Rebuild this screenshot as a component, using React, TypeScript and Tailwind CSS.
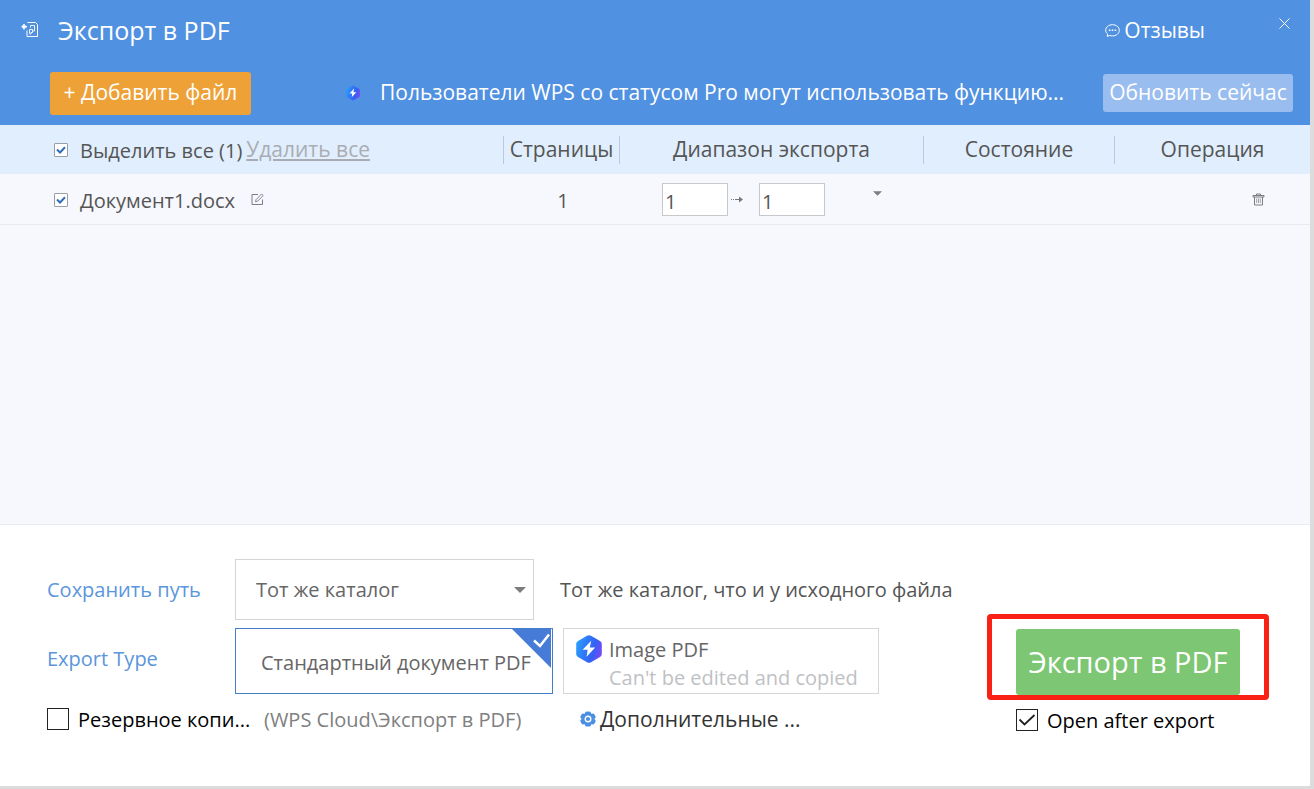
import { useState, type ReactNode } from "react";

function ExportDocIcon() {
  return (
    <svg width="18" height="18" viewBox="0 0 18 18" fill="none" stroke="#fff" aria-hidden="true">
      <path d="M6.500 1.500h8l2 2v12h-10.500v-6" />
      <path d="M8.500 12.500v-4h3v3h-1.500v1.500h-1.500M9.500 6.500v-2h4v5.500h-1.500" strokeWidth="0.9" />
      <path d="M3 3v5.500M0.500 5.700h5.500" strokeWidth="1.600" />
      <path d="M1.500 4.200l3 3M4.500 4.200l-3 3" strokeWidth="1" />
    </svg>
  );
}

function HexBolt({ id, className }: { id: string; className: string }) {
  return (
    <svg className={className} viewBox="0 0 26 28" aria-hidden="true">
      <defs>
        <linearGradient id={id} x1="0" y1="0.3" x2="1" y2="0.6">
          <stop offset="0" stopColor="#2aa0fb" />
          <stop offset="0.35" stopColor="#2f7cf8" />
          <stop offset="0.7" stopColor="#3560f4" />
          <stop offset="1" stopColor="#7a48f5" />
        </linearGradient>
      </defs>
      <path
        d="M11 0.8q2-1.1 4 0l9 5.1q1.8 1.1 1.8 3.1v10q0 2-1.8 3.1l-9 5.1q-2 1.1-4 0l-9-5.1Q0.2 21 0.2 19V9q0-2 1.8-3.1z"
        fill={`url(#${id})`}
      />
      <path d="M15.200 5.800 6.600 14.800h5l-1 7 8.600-9.200h-5.400z" fill="#fff" />
    </svg>
  );
}

function ChatIcon() {
  return (
    <svg width="15" height="15" viewBox="0 0 15 15" fill="none" stroke="#fff" aria-hidden="true">
      <path d="M2.300 13.400 2.600 11C1.300 10 0.700 8.700 0.700 7.300 0.700 4.100 3.700 1.700 7.500 1.700s6.800 2.400 6.800 5.600-3 5.600-6.800 5.600c-1 0-1.800-.1-2.600-.4z" />
      <path d="M3.800 7.300h1.600M6.700 7.300h1.600M9.600 7.300h1.600" strokeWidth="1.500" />
    </svg>
  );
}

function EditIcon() {
  return (
    <svg width="13" height="13" viewBox="0 0 13 13" fill="none" stroke="#7b7f85" aria-hidden="true">
      <path d="M7 1.500H1v10h10.500V6.500" />
      <path d="M4.500 8.700 5 6.700 10.600 1 12.200 2.500 6.600 8.200z" strokeWidth="0.9" />
    </svg>
  );
}

function TrashIcon() {
  return (
    <svg width="13" height="13" viewBox="0 0 13 13" fill="none" stroke="#7b7d83" aria-hidden="true">
      <path d="M1 2.500h11v1.500H1zM4.500 2.500v-1.500h4v1.500M2.500 4v8h8v-8" />
      <path d="M4.700 5.500v4.500M6.500 5.500v4.500M8.300 5.500v4.500" strokeWidth="0.700" />
    </svg>
  );
}

function GearIcon() {
  return (
    <svg width="16" height="16" viewBox="0 0 16 16" aria-hidden="true">
      <path
        d="M5.500.8q2.500-.7 5 0l.6 1.600.8.4 1.700-.3q1.700 1.700 2.200 4L14.600 7.600v.8l1.200 1.100q-.5 2.300-2.200 4l-1.700-.3-.8.4-.6 1.600q-2.500.7-5 0l-.6-1.600-.8-.4-1.700.3q-1.700-1.700-2.200-4L1.400 8.400v-.8L.2 6.500q.5-2.300 2.200-4l1.700.3.8-.4z"
        fill="#4a8fe2"
      />
      <circle cx="8" cy="8" r="2.800" fill="none" stroke="#fff" strokeWidth="1.400" />
    </svg>
  );
}

function Caret({ className }: { className: string }) {
  return (
    <svg className={className} viewBox="0 0 12 6" aria-hidden="true">
      <path d="M0 0h12L6 6z" fill="#7d7d7d" />
    </svg>
  );
}

function SmallCheck({ label, checked, onChange }: { label: string; checked: boolean; onChange: () => void }) {
  return (
    <span className="inline-grid shrink-0 place-items-center">
      <input
        type="checkbox"
        aria-label={label}
        checked={checked}
        onChange={onChange}
        className="col-start-1 row-start-1 size-3.5 appearance-none rounded-[1px] border border-[#9a9da3] bg-white"
      />
      {checked && (
        <svg className="pointer-events-none col-start-1 row-start-1 size-3.5" viewBox="0 0 14 14" fill="none" aria-hidden="true">
          <path d="M3 6.500 6 9.500 11 4.300" stroke="#2f6db8" strokeWidth="2" />
        </svg>
      )}
    </span>
  );
}

function LargeCheck({ checked, onChange, children }: { checked: boolean; onChange: () => void; children: ReactNode }) {
  return (
    <label className="flex items-center gap-[9px] text-xl leading-7 text-black">
      <span className="grid shrink-0 place-items-center">
        <input
          type="checkbox"
          checked={checked}
          onChange={onChange}
          className="col-start-1 row-start-1 size-[22px] appearance-none border border-[#222] bg-white"
        />
        {checked && (
          <svg className="pointer-events-none col-start-1 row-start-1 size-[22px]" viewBox="0 0 22 22" fill="none" aria-hidden="true">
            <path d="M3.500 10.500 8.500 15.500 18.500 6" stroke="#222" strokeWidth="1.800" />
          </svg>
        )}
      </span>
      <span className="pt-0.5 whitespace-nowrap">{children}</span>
    </label>
  );
}

function HeadCell({ children }: { children: ReactNode }) {
  return (
    <th scope="col" className="p-0 font-normal">
      <div className="flex h-7 items-center justify-center border-l border-[#b9c8dc] text-[21px] whitespace-nowrap">
        {children}
      </div>
    </th>
  );
}

const pageInput = "h-[33px] w-[66px] border border-[#c6c8cb] bg-white px-0.5 pt-1 text-xl text-[#555] outline-none";

export default function App() {
  const [selected, setSelected] = useState(true);
  const [backup, setBackup] = useState(false);
  const [openAfter, setOpenAfter] = useState(true);
  const [from, setFrom] = useState("1");
  const [to, setTo] = useState("1");

  return (
    <div className="flex min-h-screen flex-col border-r-4 border-b-3 border-[#dcdcdc] bg-white font-['Open_Sans','Noto_Sans',sans-serif] text-[#555]">
      <header className="bg-[#5191e1] text-white">
        <div className="flex h-[62px] items-center pb-0.5 pl-[21px]">
          <ExportDocIcon />
          <h1 className="ml-[19px] text-[25px] leading-8">Экспорт в PDF</h1>
          <a href="#feedback" className="ml-auto flex items-center gap-1 text-[21px] leading-7">
            <ChatIcon />
            Отзывы
          </a>
          <button type="button" aria-label="Закрыть" className="mr-5 mb-3.5 ml-[74px]">
            <svg width="11" height="11" viewBox="0 0 11 11" stroke="#fff" aria-hidden="true">
              <path d="M0.500 0.500l10 10M10.500 0.500l-10 10" />
            </svg>
          </button>
        </div>
        <div className="flex h-[63px] items-center pr-[17px] pb-px pl-[50px] text-[21px]">
          <button type="button" className="h-[43px] w-[201px] shrink-0 rounded-[3px] bg-[#eda137] whitespace-nowrap">
            + Добавить файл
          </button>
          <div className="ml-[95px] flex flex-1 items-center gap-5">
            <HexBolt id="bolt-small" className="h-4 w-3.5 shrink-0" />
            <p className="whitespace-nowrap">Пользователи WPS со статусом Pro могут использовать функцию...</p>
          </div>
          <button type="button" className="h-[38px] w-[190px] shrink-0 rounded-[3px] bg-[#99bdee] whitespace-nowrap">
            Обновить сейчас
          </button>
        </div>
      </header>

      <main className="flex-1 bg-[#f6f8fd]">
        <table className="w-full table-fixed border-collapse text-xl">
          <colgroup>
            <col />
            <col className="w-[116px]" />
            <col className="w-[304px]" />
            <col className="w-[191px]" />
            <col className="w-[196px]" />
          </colgroup>
          <thead>
            <tr className="h-[49px] bg-[#e0eefd]">
              <th scope="col" className="p-0 pl-[54px] text-left font-normal">
                <div className="flex items-center">
                  <SmallCheck label="Выделить все" checked={selected} onChange={() => setSelected(!selected)} />
                  <span className="ml-3 pt-0.5 whitespace-nowrap">Выделить все (1)</span>
                  <button type="button" className="ml-1 text-[21px] whitespace-nowrap text-[#a9adb3] underline underline-offset-2">
                    Удалить все
                  </button>
                </div>
              </th>
              <HeadCell>Страницы</HeadCell>
              <HeadCell>Диапазон экспорта</HeadCell>
              <HeadCell>Состояние</HeadCell>
              <HeadCell>Операция</HeadCell>
            </tr>
          </thead>
          <tbody>
            <tr className="h-[50px] border-b border-[#e7eaef]">
              <td className="p-0 pt-0.5 pl-[54px]">
                <div className="flex items-center">
                  <SmallCheck label="Документ1.docx" checked={selected} onChange={() => setSelected(!selected)} />
                  <span className="ml-3 pt-0.5">Документ1.docx</span>
                  <button type="button" aria-label="Переименовать" className="ml-4">
                    <EditIcon />
                  </button>
                </div>
              </td>
              <td className="p-0 pt-1 pl-1 text-center">1</td>
              <td className="p-0 pt-0.5 pl-[43px]">
                <div className="flex items-center">
                  <input aria-label="Первая страница" value={from} onChange={(e) => setFrom(e.target.value)} className={pageInput} />
                  <svg className="mx-[3px]" width="25" height="7" viewBox="0 0 25 7" aria-hidden="true">
                    <path d="M0 3h1v1h-1zM2 3h1v1h-1zM4 3h7v1h-7zM8 0.500 12 3.500 8 6.500z" fill="#777" />
                  </svg>
                  <input aria-label="Последняя страница" value={to} onChange={(e) => setTo(e.target.value)} className={pageInput} />
                  <button type="button" aria-label="Выбрать диапазон" className="mb-3 ml-12">
                    <Caret className="h-[5px] w-[9px]" />
                  </button>
                </div>
              </td>
              <td className="p-0" />
              <td className="p-0 pt-0.5">
                <button type="button" aria-label="Удалить" className="ml-[138px] block">
                  <TrashIcon />
                </button>
              </td>
            </tr>
          </tbody>
        </table>
      </main>

      <footer className="flex justify-between border-t border-[#e9ebf0] pt-[34px] pr-[70px] pb-[51px] pl-[47px] text-xl">
        <div className="flex flex-col">
          <div className="flex items-center">
            <label htmlFor="save-path" className="w-47 text-[#5b96dc]">
              Сохранить путь
            </label>
            <div className="grid w-[299px] items-center">
              <select
                id="save-path"
                className="col-start-1 row-start-1 h-[61px] w-full appearance-none border border-[#d3d5d8] bg-white px-5 text-[#666] outline-none"
              >
                <option>Тот же каталог</option>
              </select>
              <Caret className="pointer-events-none col-start-1 row-start-1 mr-2 h-1.5 w-3 justify-self-end" />
            </div>
            <span className="ml-[26px] whitespace-nowrap">Тот же каталог, что и у исходного файла</span>
          </div>
          <div className="mt-2 flex items-center">
            <span className="w-47 pb-1 text-[#5b96dc]">Export Type</span>
            <button
              type="button"
              aria-pressed="true"
              className="relative h-[66px] w-[318px] border border-[#4380c8] pt-1 pl-[25px] text-left whitespace-nowrap text-[#666]"
            >
              Стандартный документ PDF
              <svg className="absolute top-0 right-px" width="39" height="39" viewBox="0 0 39 39" fill="none" aria-hidden="true">
                <path d="M0 0h39v39z" fill="#477bd8" />
                <path d="M22 11.500 28 17 37 5.500" stroke="#fff" strokeWidth="2.500" />
              </svg>
            </button>
            <button type="button" aria-pressed="false" className="ml-2.5 flex h-[66px] w-[316px] gap-[7px] border border-[#d6d7da] pt-1.5 pl-3 text-left">
              <HexBolt id="bolt-large" className="h-7 w-[26px] shrink-0" />
              <span className="flex flex-col pt-px leading-7 whitespace-nowrap text-[#666]">
                Image PDF
                <span className="text-[#bfc1c4]">Can't be edited and copied</span>
              </span>
            </button>
          </div>
          <div className="mt-2.5 flex items-center">
            <div className="w-[217px]">
              <LargeCheck checked={backup} onChange={() => setBackup(!backup)}>
                Резервное копи...
              </LargeCheck>
            </div>
            <span className="w-[316px] pt-0.5 whitespace-nowrap text-[#808080]">(WPS Cloud\Экспорт в PDF)</span>
            <button type="button" className="flex items-center gap-1 text-[21px] leading-7 whitespace-nowrap text-[#333]">
              <GearIcon />
              Дополнительные ...
            </button>
          </div>
        </div>
        <div className="flex flex-col pt-[70px]">
          <div className="relative">
            <button type="button" className="h-[66px] w-[224px] rounded-[3px] bg-[#7dc673] text-[29px] whitespace-nowrap text-white">
              Экспорт в PDF
            </button>
            <div className="pointer-events-none absolute -inset-x-[29px] -top-[15px] -bottom-[5px] rounded-[4px] border-5 border-[#fb2016]" />
          </div>
          <div className="mt-2.5">
            <LargeCheck checked={openAfter} onChange={() => setOpenAfter(!openAfter)}>
              Open after export
            </LargeCheck>
          </div>
        </div>
      </footer>
    </div>
  );
}
